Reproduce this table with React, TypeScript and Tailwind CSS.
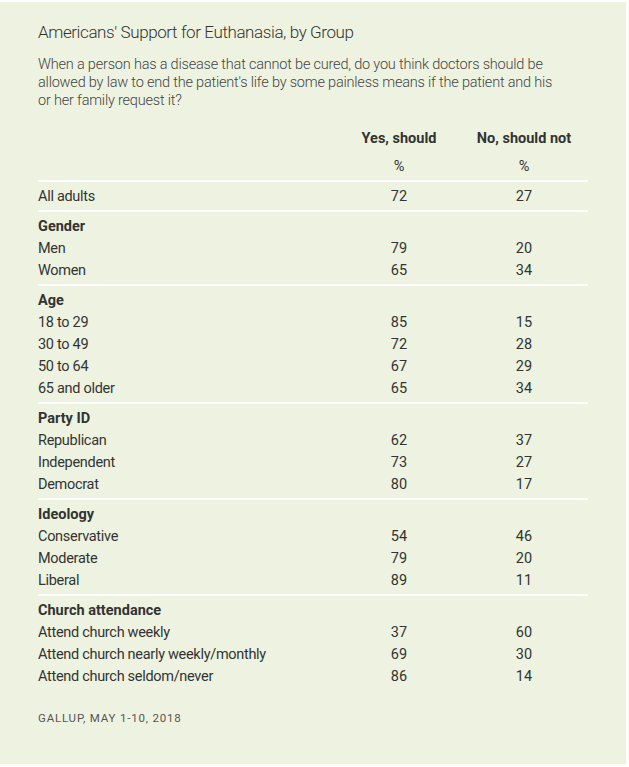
import React from "react";

type Row = { label: string; yes: string; no: string };
type Section = { title?: string; rows: Row[] };

const sections: Section[] = [
  { rows: [{ label: "All adults", yes: "72", no: "27" }] },
  {
    title: "Gender",
    rows: [
      { label: "Men", yes: "79", no: "20" },
      { label: "Women", yes: "65", no: "34" },
    ],
  },
  {
    title: "Age",
    rows: [
      { label: "18 to 29", yes: "85", no: "15" },
      { label: "30 to 49", yes: "72", no: "28" },
      { label: "50 to 64", yes: "67", no: "29" },
      { label: "65 and older", yes: "65", no: "34" },
    ],
  },
  {
    title: "Party ID",
    rows: [
      { label: "Republican", yes: "62", no: "37" },
      { label: "Independent", yes: "73", no: "27" },
      { label: "Democrat", yes: "80", no: "17" },
    ],
  },
  {
    title: "Ideology",
    rows: [
      { label: "Conservative", yes: "54", no: "46" },
      { label: "Moderate", yes: "79", no: "20" },
      { label: "Liberal", yes: "89", no: "11" },
    ],
  },
  {
    title: "Church attendance",
    rows: [
      { label: "Attend church weekly", yes: "37", no: "60" },
      { label: "Attend church nearly weekly/monthly", yes: "69", no: "30" },
      { label: "Attend church seldom/never", yes: "86", no: "14" },
    ],
  },
];

function DataRow({ r }: { r: Row }) {
  return (
    <div className="grid grid-cols-[300px_122px_128px] h-[22px] items-center text-[14.5px] text-[#333]">
      <div className="tracking-[-0.3px]">{r.label}</div>
      <div className="text-center">{r.yes}</div>
      <div className="text-center">{r.no}</div>
    </div>
  );
}

export default function App() {
  return (
    <div className="w-[629px] h-[767px] bg-white pt-[2px] pr-[3px] pb-[3px]">
      <div
        className="w-[626px] h-[762px] bg-[#edf3e0] pl-[38px] pt-[19px] text-[#333]"
        style={{ fontFamily: "Roboto, 'Liberation Sans', sans-serif" }}
      >
        <div className="text-[17px] font-light leading-[22px] text-[#333] tracking-[-0.4px]">
          Americans' Support for Euthanasia, by Group
        </div>
        <div className="mt-[13px] w-[520px] text-[14.5px] leading-[18px] font-light text-[#444] tracking-[-0.2px]">
          When a person has a disease that cannot be cured, do you think doctors should be allowed by law to end
          the patient's life by some painless means if the patient and his or her family request it?
        </div>
        <div className="w-[550px] mt-[18px]">
          <div className="grid grid-cols-[300px_122px_128px] h-[22px] items-center text-[14.5px] font-bold">
            <div />
            <div className="text-center">Yes, should</div>
            <div className="text-center">No, should not</div>
          </div>
          <div className="grid grid-cols-[300px_122px_128px] h-[22px] mt-[6px] items-center text-[14.5px]">
            <div />
            <div className="text-center">%</div>
            <div className="text-center">%</div>
          </div>
          {sections.map((s, i) => (
            <div key={i}>
              <div className="mt-[2px] mb-[4px] h-[2px] bg-white" />
              {s.title && (
                <div className="h-[22px] flex items-center text-[14.5px] font-bold">{s.title}</div>
              )}
              {s.rows.map((r) => (
                <DataRow key={r.label} r={r} />
              ))}
            </div>
          ))}
        </div>
        <div className="mt-[23px] text-[11.5px] tracking-[0.8px] text-[#555] leading-[14px]">
          GALLUP, MAY 1-10, 2018
        </div>
      </div>
    </div>
  );
}
